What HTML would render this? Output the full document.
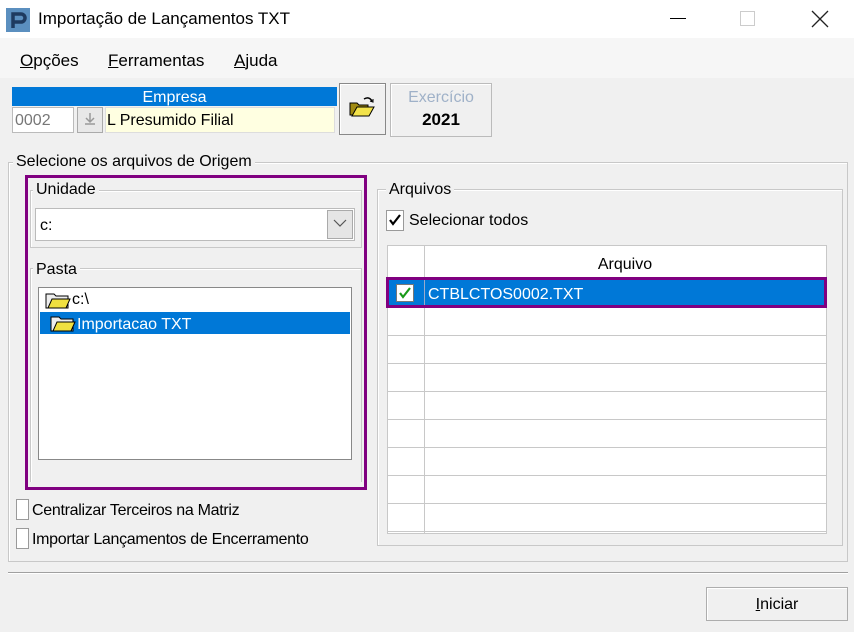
<!DOCTYPE html>
<html><head><meta charset="utf-8"><style>
*{box-sizing:border-box;margin:0;padding:0}
body{width:854px;height:632px;background:#f0f0f0;font-family:"Liberation Sans",sans-serif;font-size:15px;color:#000;position:relative;overflow:hidden}
.a{position:absolute}
.grp{position:absolute;border:1px solid #c8c8c8;box-shadow:inset 1px 1px 0 #fff}
.lbl{position:absolute;background:#f0f0f0;padding:0 3px;font-size:16px}
.u{text-decoration:underline}
.cb{position:absolute;width:13px;height:21px;background:#fff;border:1px solid #9a9a9a}
.row{position:absolute;left:0;right:0;height:1px;background:#c8c8c8}
</style></head><body>
<div class="a" style="left:0;top:0;width:854px;height:38px;background:#fff"></div>
<div class="a" style="left:0;top:38px;width:854px;height:40px;background:#f6f6f6"></div>
<div class="a" style="left:6px;top:8px;width:24px;height:24px;background:#5b8fbf"></div>
<svg class="a" style="left:6px;top:8px" width="24" height="24"><path d="M7 20V6h8a4 4 0 0 1 0 8H7" fill="none" stroke="#1e3a5f" stroke-width="3.5"/></svg>
<div class="a" style="left:38px;top:9px;font-size:17px">Importação de Lançamentos TXT</div>
<div class="a" style="left:670px;top:18px;width:16px;height:1px;background:#000"></div>
<div class="a" style="left:740px;top:11px;width:15px;height:15px;border:1px solid #ccc"></div>
<svg class="a" style="left:811px;top:10px" width="18" height="18"><path d="M1 1L17 17M17 1L1 17" stroke="#222" stroke-width="1.3"/></svg>
<div class="a" style="left:20px;top:51px;font-size:17px"><span class="u">O</span>pções</div>
<div class="a" style="left:108px;top:51px;font-size:17px"><span class="u">F</span>erramentas</div>
<div class="a" style="left:234px;top:51px;font-size:17px"><span class="u">A</span>juda</div>

<div class="a" style="left:12px;top:87px;width:325px;height:19px;background:#0078d7;color:#fff;text-align:center;font-size:16px;line-height:21px">Empresa</div>
<div class="a" style="left:12px;top:107px;width:62px;height:26px;background:#fff;border:1px solid #bbb;color:#777;font-size:16px;padding:4px 2px">0002</div>
<div class="a" style="left:77px;top:107px;width:26px;height:26px;background:#e8e8e8;border:1px solid #aaa"></div>
<svg class="a" style="left:82px;top:111px" width="16" height="16"><path d="M8 2v8M4 7l4 4 4-4M3 13h10" fill="none" stroke="#999" stroke-width="1.5"/></svg>
<div class="a" style="left:105px;top:107px;width:230px;height:26px;background:#ffffe1;border:1px solid #ddd;font-size:16px;padding:4px 1px">L Presumido Filial</div>
<div class="a" style="left:339px;top:83px;width:47px;height:52px;background:#f0f0f0;border:1px solid #888;box-shadow:inset 1px 1px 0 #fff"></div>
<svg class="a" style="left:348px;top:95px" width="28" height="24"><path d="M2 8h7l2 2h9v10H2z" fill="#a08a10" stroke="#000"/><path d="M4 21l5-9h17l-5 9z" fill="#f2e24a" stroke="#000"/><path d="M16 4q5-3 8 2" fill="none" stroke="#000" stroke-width="1.5"/><path d="M22 6l3 1 0-3" fill="none" stroke="#000"/></svg>
<div class="a" style="left:390px;top:83px;width:102px;height:54px;border:1px solid #bbb;box-shadow:inset 1px 1px 0 #fff"></div>
<div class="a" style="left:390px;top:89px;width:102px;text-align:center;color:#9fb1c8;font-size:16px">Exercício</div>
<div class="a" style="left:390px;top:110px;width:102px;text-align:center;font-weight:bold;font-size:17px">2021</div>

<div class="grp" style="left:8px;top:162px;width:840px;height:400px"></div>
<div class="lbl" style="left:13px;top:153px">Selecione os arquivos de Origem</div>

<div class="a" style="left:25px;top:175px;width:342px;height:315px;border:3px solid #800080"></div>
<div class="grp" style="left:30px;top:190px;width:332px;height:58px"></div>
<div class="lbl" style="left:33px;top:181px">Unidade</div>
<div class="a" style="left:35px;top:208px;width:320px;height:33px;background:#fff;border:1px solid #bbb;font-size:16px;padding:8px 4px">c:</div>
<div class="a" style="left:327px;top:210px;width:26px;height:29px;background:#e5e5e5;border:1px solid #aaa"></div>
<svg class="a" style="left:333px;top:218px" width="14" height="10"><path d="M1 2l6 6 6-6" fill="none" stroke="#555" stroke-width="1.2"/></svg>
<div class="grp" style="left:30px;top:268px;width:332px;height:214px;border-bottom:none"></div>
<div class="lbl" style="left:33px;top:261px">Pasta</div>
<div class="a" style="left:38px;top:287px;width:314px;height:173px;background:#fff;border:1px solid #888"></div>
<div class="a" style="left:40px;top:312px;width:310px;height:22px;background:#0078d7"></div>
<svg class="a" style="left:45px;top:291px" width="26" height="18"><path d="M1 3h8l2 2h12v12H1z" fill="#eee" stroke="#000"/><path d="M3 17l4-9h18l-4 9z" fill="#f0e040" stroke="#000"/></svg>
<div class="a" style="left:72px;top:291px;font-size:16px">c:\</div>
<svg class="a" style="left:50px;top:314px" width="26" height="18"><path d="M1 3h8l2 2h12v12H1z" fill="#eee" stroke="#000"/><path d="M3 17l4-9h18l-4 9z" fill="#f0e040" stroke="#000"/></svg>
<div class="a" style="left:77px;top:316px;font-size:16px;color:#fff">Importacao TXT</div>

<div class="cb" style="left:16px;top:499px"></div>
<div class="a" style="left:32px;top:502px;font-size:16px;letter-spacing:-0.3px">Centralizar Terceiros na Matriz</div>
<div class="cb" style="left:16px;top:528px"></div>
<div class="a" style="left:32px;top:531px;font-size:16px;letter-spacing:-0.3px">Importar Lançamentos de Encerramento</div>

<div class="grp" style="left:377px;top:189px;width:466px;height:357px"></div>
<div class="lbl" style="left:386px;top:181px">Arquivos</div>
<div class="cb" style="left:386px;top:210px;width:18px"></div>
<svg class="a" style="left:388px;top:213px" width="14" height="14"><path d="M2 7l3 4 7-9" fill="none" stroke="#000" stroke-width="2.2"/></svg>
<div class="a" style="left:409px;top:212px;font-size:16px">Selecionar todos</div>

<div class="a" style="left:387px;top:245px;width:440px;height:289px;background:#fff;border:1px solid #c8c8c8">
<div class="a" style="left:36px;top:0;width:1px;height:288px;background:#c8c8c8"></div>
<div class="a" style="left:36px;top:10px;width:402px;text-align:center;font-size:16px">Arquivo</div>
<div class="row" style="top:31px"></div>
<div class="row" style="top:89px"></div><div class="row" style="top:117px"></div><div class="row" style="top:145px"></div><div class="row" style="top:173px"></div><div class="row" style="top:201px"></div><div class="row" style="top:229px"></div><div class="row" style="top:257px"></div><div class="row" style="top:285px"></div>
</div>
<div class="a" style="left:386px;top:277px;width:441px;height:31px;background:#0078d7;border:3px solid #800080"></div>
<div class="a" style="left:424px;top:280px;width:1px;height:25px;background:#9ac"></div>
<div class="a" style="left:396px;top:284px;width:18px;height:18px;background:#fff;border:1px solid #777"></div>
<svg class="a" style="left:398px;top:286px" width="14" height="14"><path d="M2 7l3 4 7-9" fill="none" stroke="#1a9a1a" stroke-width="2.2"/></svg>
<div class="a" style="left:428px;top:286px;font-size:16px;color:#fff">CTBLCTOS0002.TXT</div>

<div class="a" style="left:8px;top:572px;width:840px;height:2px;border-top:1px solid #a0a0a0;border-bottom:1px solid #fff"></div>
<div class="a" style="left:706px;top:587px;width:142px;height:34px;background:#f0f0f0;border:1px solid #adadad;box-shadow:inset 1px 1px 0 #fff;text-align:center;font-size:16px;line-height:34px"><span class="u">I</span>niciar</div>
</body></html>
